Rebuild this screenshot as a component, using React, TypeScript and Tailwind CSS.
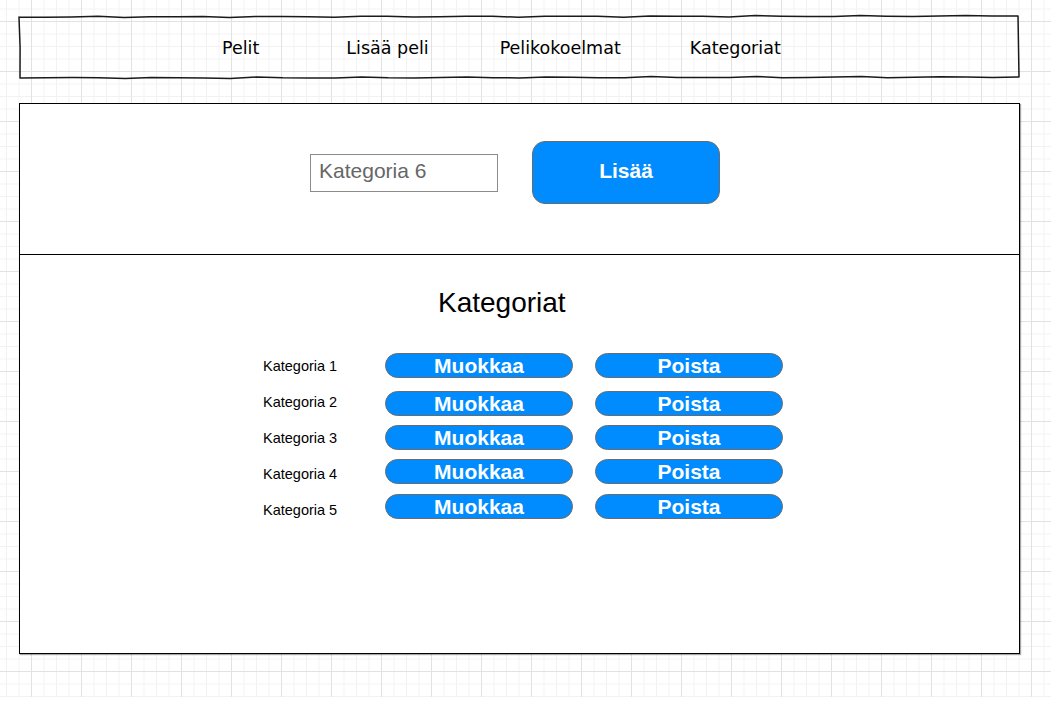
import type { ReactNode } from "react";

const navItems = [
  { label: "Pelit", gap: "ml-0" },
  { label: "Lisää peli", gap: "ml-[87px]" },
  { label: "Pelikokoelmat", gap: "ml-[71px]" },
  { label: "Kategoriat", gap: "ml-[69px]" },
];

// buttons in the mockup are not perfectly aligned with their labels
const categories = [
  { name: "Kategoria 1", offset: "pt-[5px]" },
  { name: "Kategoria 2", offset: "pt-[7px]" },
  { name: "Kategoria 3", offset: "pt-[5px]" },
  { name: "Kategoria 4", offset: "pt-[3px]" },
  { name: "Kategoria 5", offset: "pt-[2px]" },
];

function wobblyEdge(x1: number, y1: number, x2: number, y2: number, seed: number) {
  const len = Math.hypot(x2 - x1, y2 - y1);
  const steps = Math.max(2, Math.round(len / 26));
  const nx = -(y2 - y1) / len;
  const ny = (x2 - x1) / len;
  const pts: string[] = [];
  for (let i = 1; i <= steps; i++) {
    const t = i / steps;
    const amp = i === steps ? 0 : 0.5 * Math.sin(i * 1.7 + seed) + 0.3 * Math.sin(i * 3.3 + seed * 2);
    const x = x1 + (x2 - x1) * t + nx * amp;
    const y = y1 + (y2 - y1) * t + ny * amp;
    pts.push(`L${x.toFixed(1)} ${y.toFixed(1)}`);
  }
  return pts.join(" ");
}

function SketchBorder() {
  const d = [
    "M2 3",
    wobblyEdge(2, 3, 1001, 2, 0.4),
    wobblyEdge(1001, 2, 1002, 63, 1.9),
    wobblyEdge(1002, 63, 3, 64, 3.1),
    wobblyEdge(3, 64, 2, 3, 5.2),
  ].join(" ");
  return (
    <svg
      className="pointer-events-none absolute left-[-2px] top-[-2px]"
      width="1005"
      height="67"
      viewBox="0 0 1005 67"
      fill="none"
    >
      <path d={d} stroke="#1a1a1a" strokeWidth="1.5" strokeLinejoin="round" strokeLinecap="round" />
    </svg>
  );
}

function PillButton({ children }: { children: ReactNode }) {
  return (
    <button
      type="button"
      className="flex h-[25px] w-[188px] items-center justify-center rounded-full border border-[#6b6b6b] bg-[#008cff] pb-[1px] text-[21px] font-bold leading-none text-white"
    >
      {children}
    </button>
  );
}

export default function App() {
  return (
    <div className="min-h-[701px] w-full bg-white font-['Liberation_Sans',Arial,sans-serif] text-black">
      <div className="h-[697px] w-full bg-[linear-gradient(to_right,#e2e2e2_1px,transparent_1px),linear-gradient(to_bottom,#e2e2e2_1px,transparent_1px),linear-gradient(to_right,#f2f2f2_1px,transparent_1px),linear-gradient(to_bottom,#f2f2f2_1px,transparent_1px)] bg-[size:50px_50px,50px_50px,12.5px_12.5px,12.5px_12.5px] bg-[position:31px_21px] pl-[19px] pt-[16px]">
        <nav className="relative flex h-[62px] w-[1000px] items-center pl-[203px] pt-[3px] font-['DejaVu_Sans',Verdana,sans-serif] text-[17.5px]">
          <SketchBorder />
          {navItems.map((item) => (
            <span key={item.label} className={item.gap}>
              {item.label}
            </span>
          ))}
        </nav>

        <main className="mt-[25px] flex h-[551px] w-[1001px] flex-col border border-black bg-white shadow-[1px_1px_1px_rgba(0,0,0,0.35)]">
          <section className="h-[151px] shrink-0 border-b border-black pl-[290px] pt-[37px]">
            <div className="flex h-[63px] items-center gap-[34px]">
              <input
                readOnly
                defaultValue="Kategoria 6"
                className="h-[38px] w-[188px] border border-[#8c8c8c] bg-white pb-[4px] pl-[8px] text-[21px] text-[#666666] outline-none"
              />
              <button
                type="button"
                className="h-[63px] w-[188px] rounded-[13px] border border-[#6b6b6b] bg-[#008cff] pb-[3px] text-[21px] font-bold text-white"
              >
                Lisää
              </button>
            </div>
          </section>

          <section className="flex-1">
            <h1 className="ml-[418px] mt-[32px] h-[32px] text-[28px] leading-[32px]">Kategoriat</h1>
            <ul className="ml-[243px] mt-[29px] flex flex-col">
              {categories.map((cat) => (
                <li key={cat.name} className="flex h-[36px] items-start">
                  <span className="flex h-[36px] w-[122px] items-center pt-[2px] text-[14.5px]">{cat.name}</span>
                  <div className={`flex gap-[22px] ${cat.offset}`}>
                    <PillButton>Muokkaa</PillButton>
                    <PillButton>Poista</PillButton>
                  </div>
                </li>
              ))}
            </ul>
          </section>
        </main>
      </div>
    </div>
  );
}
